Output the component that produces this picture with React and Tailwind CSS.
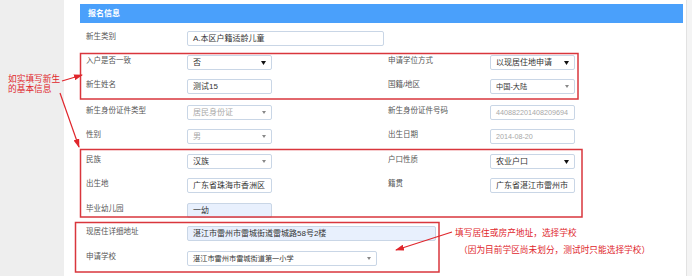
import React from 'react';

const BLACK_ARROW = 'black';
const GRAY_ARROW = 'gray';

// small select caret, two looks in the screenshot
const Caret = ({ kind }) =>
  kind === BLACK_ARROW ? (
    <svg width="5" height="4" viewBox="0 0 5 4" className="shrink-0">
      <polygon points="0,0 5,0 2.5,4" fill="#111" />
    </svg>
  ) : (
    <svg width="4" height="3" viewBox="0 0 4 3" className="shrink-0">
      <polygon points="0,0 4,0 2,3" fill="#888" />
    </svg>
  );

const Field = ({ value, width = 'w-[85px]', caret, muted, filled, small }) => (
  <div
    className={`flex h-[15px] items-center justify-between overflow-hidden rounded-[2px] border border-[#c9d6e6] pl-[5px] pr-[5px] ${width} ${
      filled ? 'bg-[#e8f0fd]' : 'bg-white'
    }`}
  >
    <span
      className={`whitespace-nowrap leading-none ${small ? 'text-[7.2px]' : 'text-[8px]'} ${
        muted ? 'text-[#a8a8a8]' : 'text-[#333]'
      }`}
    >
      {value}
    </span>
    {caret && <Caret kind={caret} />}
  </div>
);

const Label = ({ children, className = '' }) => (
  <div className={`shrink-0 pb-[3px] text-[7.5px] leading-none text-[#555] ${className}`}>{children}</div>
);

const Row = ({ mt, label, field, rightLabel, rightField }) => (
  <div className={`flex h-[15px] items-center ${mt}`}>
    <Label className="w-[107px] pl-[6px]">{label}</Label>
    <div className="w-[201px] shrink-0">{field}</div>
    {rightLabel && <Label className="w-[102px]">{rightLabel}</Label>}
    {rightField}
  </div>
);

const RED = '#d9363c';

export default function App() {
  return (
    <div className="relative flex h-[276px] w-[692px] overflow-hidden bg-white font-['Liberation_Sans','Noto_Sans_CJK_SC',sans-serif]">
      {/* left gray gutter with note */}
      <div className="w-[64px] shrink-0 bg-[#eeeeee] pl-[8px] pt-[74px] text-[8.7px] leading-[10px] text-[#e0262c]">
        <div className="whitespace-nowrap">如实填写新生</div>
        <div className="whitespace-nowrap">的基本信息</div>
      </div>

      <div className="w-[622px] shrink-0 pl-[16px] pt-[4px]">
        <div className="w-[603px]">
          <div className="flex h-[19px] items-center bg-[#4aa0fb] pl-[8px] text-[8px] font-bold text-white">
            报名信息
          </div>

          <div className="flex h-[15px] items-center mt-[8px]">
            <Label className="w-[107px] pl-[6px]">新生类别</Label>
            <Field value="A.本区户籍适龄儿童" width="w-[197px]" />
          </div>

          <Row
            mt="mt-[9px]"
            label="入户是否一致"
            field={<Field value="否" caret={BLACK_ARROW} />}
            rightLabel="申请学位方式"
            rightField={<Field value="以现居住地申请" caret={BLACK_ARROW} />}
          />
          <Row
            mt="mt-[9px]"
            label="新生姓名"
            field={<Field value="测试15" />}
            rightLabel="国籍/地区"
            rightField={<Field value="中国-大陆" caret={GRAY_ARROW} small />}
          />
          <Row
            mt="mt-[11px]"
            label="新生身份证件类型"
            field={<Field value="居民身份证" caret={GRAY_ARROW} muted />}
            rightLabel="新生身份证件号码"
            rightField={<Field value="440882201408209694" muted small />}
          />
          <Row
            mt="mt-[9px]"
            label="性别"
            field={<Field value="男" caret={GRAY_ARROW} muted />}
            rightLabel="出生日期"
            rightField={<Field value="2014-08-20" muted small />}
          />
          <Row
            mt="mt-[10px]"
            label="民族"
            field={<Field value="汉族" caret={GRAY_ARROW} />}
            rightLabel="户口性质"
            rightField={<Field value="农业户口" caret={BLACK_ARROW} />}
          />
          <Row
            mt="mt-[9px]"
            label="出生地"
            field={<Field value="广东省珠海市香洲区" />}
            rightLabel="籍贯"
            rightField={<Field value="广东省湛江市雷州市" />}
          />
          <Row mt="mt-[10px]" label="毕业幼儿园" field={<Field value="一幼" filled />} />

          <div className="flex h-[15px] items-center mt-[8px]">
            <Label className="w-[107px] pl-[6px]">现居住详细地址</Label>
            <Field value="湛江市雷州市雷城街道雷城路58号2楼" width="w-[249px]" filled />
            <div className="ml-[19px] whitespace-nowrap pb-[2px] text-[8.7px] leading-[10px] text-[#e0262c]">
              填写居住或房产地址，选择学校
            </div>
          </div>

          <div className="flex h-[15px] items-center mt-[10px]">
            <Label className="w-[107px] pl-[6px]">申请学校</Label>
            <Field value="湛江市雷州市雷城街道第一小学" width="w-[190px]" caret={GRAY_ARROW} small />
            <div className="-mt-[6px] ml-[82px] self-start whitespace-nowrap text-[8.7px] leading-[10px] text-[#e0262c]">
              （因为目前学区尚未划分，测试时只能选择学校）
            </div>
          </div>
        </div>
      </div>

      <div className="w-[6px] shrink-0 border-l border-[#e2e2e2] bg-[#f4f4f4]" />

      {/* annotation boxes and arrows drawn over the form */}
      <svg className="pointer-events-none absolute left-0 top-0" width="692" height="276">
        <defs>
          <marker id="ah" markerUnits="userSpaceOnUse" markerWidth="9" markerHeight="6" refX="8" refY="3" orient="auto">
            <polygon points="0,0 9,3 0,6" fill="#e0262c" />
          </marker>
        </defs>
        <rect x="80.5" y="53.5" width="497.5" height="45.5" fill="none" stroke={RED} strokeWidth="1.5" />
        <rect x="80.5" y="149.5" width="501.5" height="67.5" fill="none" stroke={RED} strokeWidth="1.5" />
        <rect x="75.5" y="222.5" width="363.5" height="49.5" fill="none" stroke={RED} strokeWidth="1.5" />
        <line x1="62" y1="81" x2="82" y2="75" stroke="#e0262c" strokeWidth="1.2" markerEnd="url(#ah)" />
        <line x1="60" y1="93" x2="79" y2="147" stroke="#e0262c" strokeWidth="1.2" markerEnd="url(#ah)" />
        <line x1="452" y1="232" x2="396" y2="250" stroke="#e0262c" strokeWidth="1.2" markerEnd="url(#ah)" />
      </svg>
    </div>
  );
}
